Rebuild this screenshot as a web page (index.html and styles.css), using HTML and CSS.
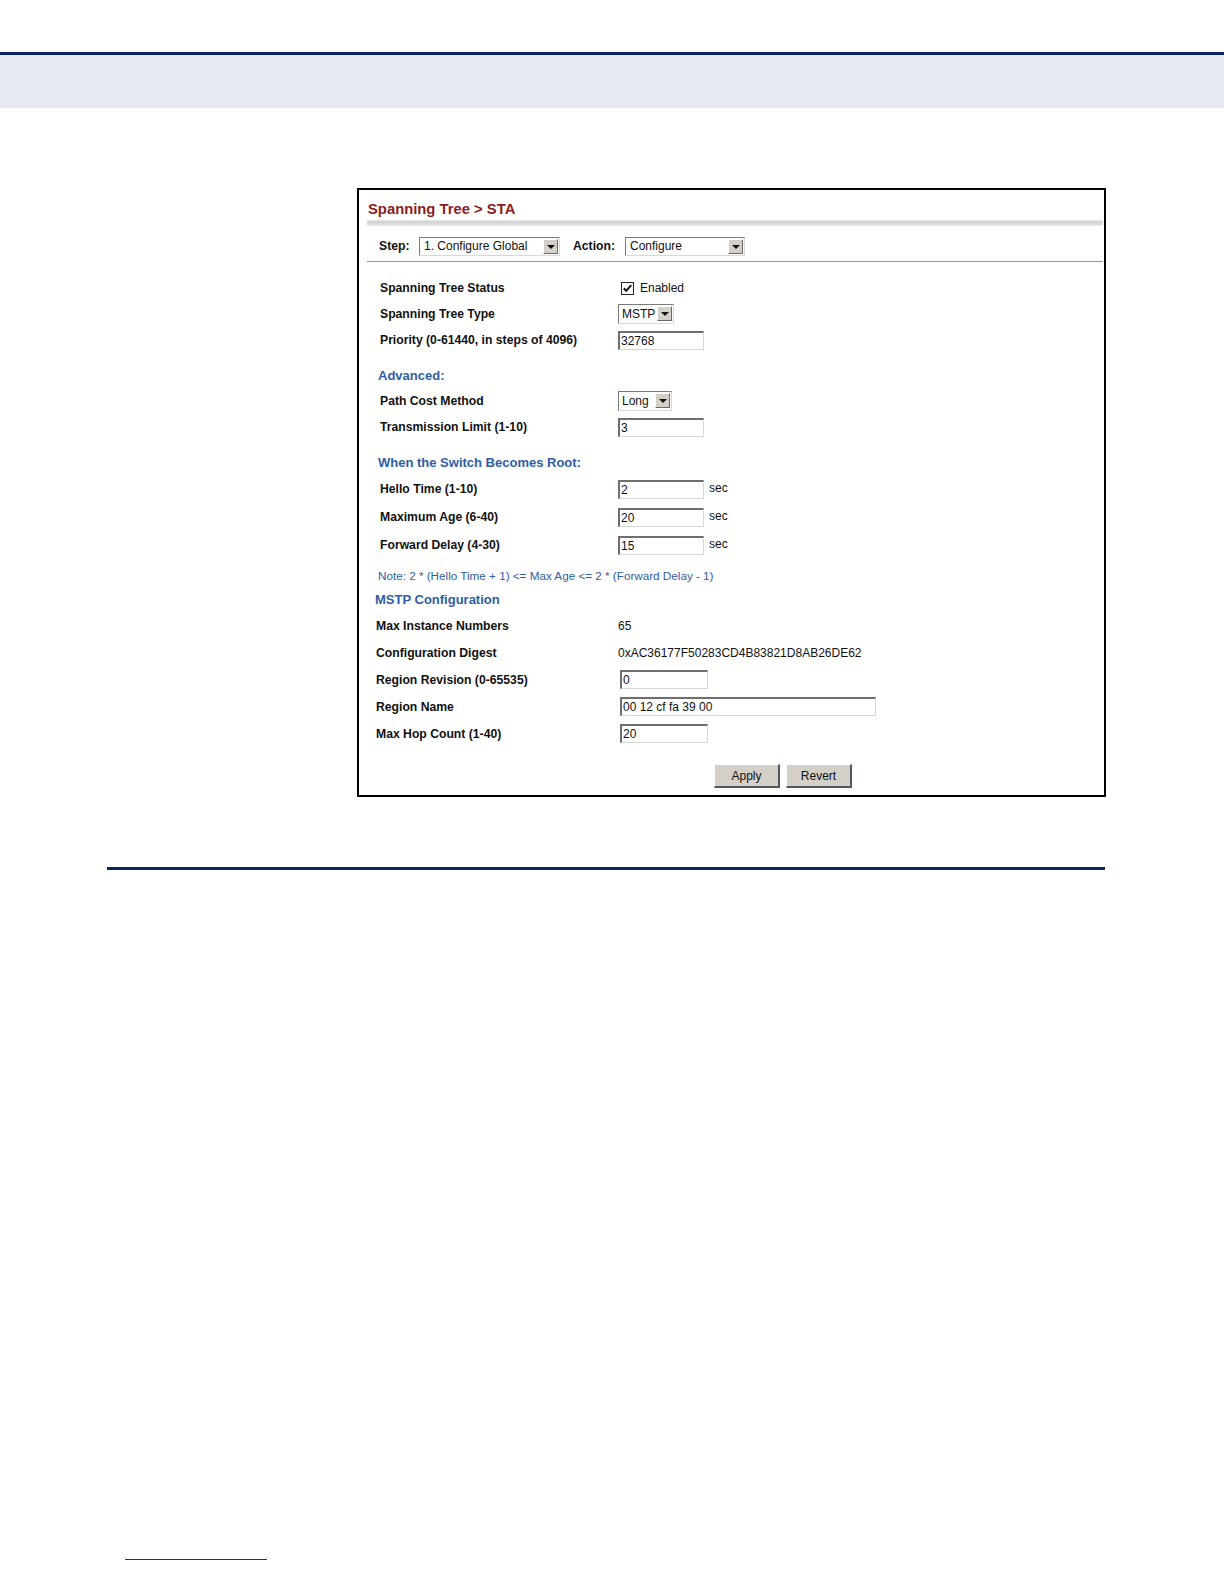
FILE: index.html
```html
<!DOCTYPE html>
<html>
<head>
<meta charset="utf-8">
<link rel="stylesheet" href="styles.css">
</head>
<body>
<div class="page-top"></div>
<div class="page-rule"></div>
<div class="page-band"></div>

<div class="shot-wrap">
  <div class="shot">
    <div class="title">Spanning Tree &gt; STA</div>
    <div class="title-rule"></div>
    <div class="step-row">
      <span class="step-label">Step:</span>
      <div class="select sel-step"><span class="sel-text">1. Configure Global</span><span class="sel-btn"><i class="tri"></i></span></div>
      <span class="step-label action-label">Action:</span>
      <div class="select sel-action"><span class="sel-text">Configure</span><span class="sel-btn"><i class="tri"></i></span></div>
    </div>
    <div class="step-rule"></div>

    <div class="sect first">
      <div class="row h26"><span class="lbl">Spanning Tree Status</span><span class="val"><span class="chk"><svg width="11" height="11" viewBox="0 0 11 11"><path d="M1.8 5.2 L4.2 7.8 L9.2 2.2" fill="none" stroke="#111" stroke-width="2"/></svg></span><span class="chk-text">Enabled</span></span></div>
      <div class="row h26"><span class="lbl">Spanning Tree Type</span><span class="val"><div class="select sel-small"><span class="sel-text">MSTP</span><span class="sel-btn"><i class="tri"></i></span></div></span></div>
      <div class="row h26"><span class="lbl">Priority (0-61440, in steps of 4096)</span><span class="val"><span class="inp w86">32768</span></span></div>
    </div>

    <div class="head head-adv">Advanced:</div>
    <div class="sect">
      <div class="row h26"><span class="lbl">Path Cost Method</span><span class="val"><div class="select sel-long"><span class="sel-text">Long</span><span class="sel-btn"><i class="tri"></i></span></div></span></div>
      <div class="row h26"><span class="lbl">Transmission Limit (1-10)</span><span class="val"><span class="inp w86">3</span></span></div>
    </div>

    <div class="head head-root">When the Switch Becomes Root:</div>
    <div class="sect">
      <div class="row h28"><span class="lbl">Hello Time (1-10)</span><span class="val"><span class="inp w86">2</span><span class="unit">sec</span></span></div>
      <div class="row h28"><span class="lbl">Maximum Age (6-40)</span><span class="val"><span class="inp w86">20</span><span class="unit">sec</span></span></div>
      <div class="row h28"><span class="lbl">Forward Delay (4-30)</span><span class="val"><span class="inp w86">15</span><span class="unit">sec</span></span></div>
    </div>

    <div class="note">Note: 2 * (Hello Time + 1) &lt;= Max Age &lt;= 2 * (Forward Delay - 1)</div>

    <div class="head head-mstp">MSTP Configuration</div>
    <div class="sect mstp">
      <div class="row h27"><span class="lbl">Max Instance Numbers</span><span class="val"><span class="txt">65</span></span></div>
      <div class="row h27"><span class="lbl">Configuration Digest</span><span class="val"><span class="txt">0xAC36177F50283CD4B83821D8AB26DE62</span></span></div>
      <div class="row h27"><span class="lbl">Region Revision (0-65535)</span><span class="val"><span class="inp w88">0</span></span></div>
      <div class="row h27"><span class="lbl">Region Name</span><span class="val"><span class="inp w255">00 12 cf fa 39 00</span></span></div>
      <div class="row h27"><span class="lbl">Max Hop Count (1-40)</span><span class="val"><span class="inp w88">20</span></span></div>
    </div>

    <div class="buttons">
      <span class="btn">Apply</span>
      <span class="btn">Revert</span>
    </div>
  </div>
</div>

<div class="bottom-rule"></div>
<div class="foot-space"></div>
<div class="foot-rule"></div>
</body>
</html>
```

FILE: styles.css
```css
html, body {
  margin: 0;
  padding: 0;
  background: #fff;
}
body {
  width: 1224px;
  height: 1584px;
  overflow: hidden;
  font-family: "Liberation Sans", Arial, sans-serif;
  color: #111;
}
.page-top { height: 52px; }
.page-rule { height: 3px; background: #0c2660; }
.page-band { height: 53px; background: #e6e9f1; }

.shot-wrap {
  padding-top: 80px;
  padding-left: 357px;
}
.shot {
  width: 745px;
  height: 605px;
  border: 2px solid #000;
  background: #fff;
  box-sizing: content-box;
}
.title {
  height: 21px;
  margin-top: 9px;
  padding-left: 9px;
  font-size: 14.8px;
  font-weight: bold;
  color: #8a1c22;
  line-height: 21px;
}
.title-rule {
  height: 6px;
  margin: 0 1px 0 8px;
  background: linear-gradient(#e6e6e6, #d2d2d2 40%, #ececec);
}
.step-row {
  height: 34px;
  box-sizing: border-box;
  display: flex;
  align-items: flex-start;
  padding-top: 11px;
  padding-left: 20px;
}
.step-label {
  font-size: 12.2px;
  font-weight: bold;
  width: 40px;
  line-height: 19px;
}
.action-label { width: 52px; margin-left: 13px; }
.step-rule {
  height: 1px;
  margin: 1px 1px 0 8px;
  background: #9a9a9a;
}

.select {
  display: flex;
  height: 19px;
  box-sizing: border-box;
  border-top: 1px solid #7a7a7a;
  border-left: 1px solid #7a7a7a;
  border-right: 1px solid #d8d8d8;
  border-bottom: 1px solid #d8d8d8;
  background: #fff;
  font-size: 12px;
}
.sel-text {
  flex: 1;
  padding-left: 4px;
  line-height: 17px;
  white-space: nowrap;
}
.sel-btn {
  width: 15px;
  height: 15px;
  margin: 1px 1px 0 0;
  box-sizing: border-box;
  background: #d4d0c8;
  border-top: 1px solid #fff;
  border-left: 1px solid #fff;
  border-right: 1px solid #6a6a6a;
  border-bottom: 1px solid #6a6a6a;
  display: flex;
  align-items: center;
  justify-content: center;
}
.tri {
  width: 0; height: 0;
  border-left: 4px solid transparent;
  border-right: 4px solid transparent;
  border-top: 4px solid #111;
}
.sel-step { width: 141px; }
.sel-action { width: 120px; }
.sel-small { width: 56px; height: 20px; }
.sel-long { width: 54px; height: 20px; }
.sel-small .sel-text, .sel-long .sel-text { line-height: 18px; padding-left: 3px; }

.sect { padding-left: 21px; }
.sect.first { padding-top: 13px; }
.row {
  display: flex;
  align-items: center;
}
.h26 { height: 26px; }
.h27 { height: 27px; }
.h28 { height: 28px; }
.lbl {
  width: 238px;
  font-size: 12.2px;
  font-weight: bold;
  white-space: nowrap;
}
.val {
  display: flex;
  align-items: center;
}
.chk {
  width: 13px;
  height: 13px;
  box-sizing: border-box;
  margin-left: 3px;
  border: 1px solid #222;
  background: #fff;
  display: flex;
  align-items: center;
  justify-content: center;
}
.chk-text { font-size: 12px; margin-left: 6px; }
.inp {
  display: block;
  height: 19px;
  box-sizing: border-box;
  border-top: 2px solid #6e6e6e;
  border-left: 2px solid #6e6e6e;
  border-right: 1px solid #d6d6d6;
  border-bottom: 1px solid #d6d6d6;
  font-size: 12px;
  line-height: 16px;
  padding-left: 1px;
  white-space: nowrap;
}
.w86 { width: 86px; }
.w88 { width: 88px; margin-left: 2px; }
.w255 { width: 256px; margin-left: 2px; }
.unit { font-size: 12px; margin-left: 5px; margin-top: -3px; }
.txt { font-size: 12px; }

.head {
  font-size: 13px;
  font-weight: bold;
  color: #2f5da6;
  padding-left: 19px;
  display: flex;
  align-items: center;
}
.head-adv { height: 26px; margin-top: 9px; }
.head-root { height: 26px; margin-top: 9px; }
.note {
  height: 26px;
  margin-top: 3px;
  padding-left: 19px;
  font-size: 11.7px;
  color: #2f5da6;
  display: flex;
  align-items: center;
}
.head-mstp { height: 23px; padding-left: 16px; }
.sect.mstp { padding-left: 17px; padding-top: 1px; }
.sect.mstp .lbl { width: 242px; }

.buttons {
  display: flex;
  gap: 6px;
  margin-top: 17px;
  padding-left: 355px;
}
.btn {
  width: 66px;
  height: 24px;
  box-sizing: border-box;
  background: #d4d0c8;
  border-top: 1px solid #fff;
  border-left: 1px solid #fff;
  border-right: 2px solid #555;
  border-bottom: 2px solid #555;
  font-size: 12px;
  display: flex;
  align-items: center;
  justify-content: center;
}

.bottom-rule {
  margin-top: 70px;
  margin-left: 107px;
  width: 998px;
  height: 3px;
  background: #0c2660;
}
.foot-space { height: 689px; }
.foot-rule {
  margin-left: 125px;
  width: 142px;
  height: 1px;
  background: #333;
}
```
